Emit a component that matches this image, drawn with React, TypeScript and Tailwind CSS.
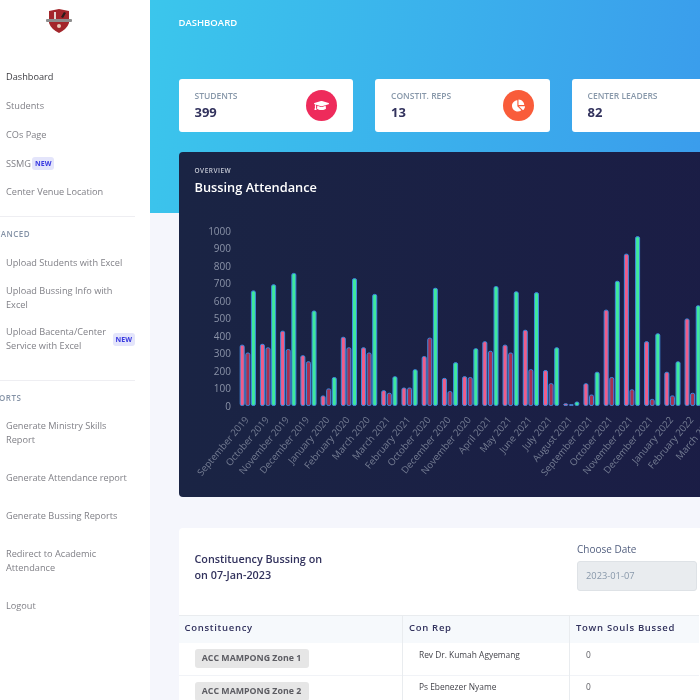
import React from 'react';
import { FaGraduationCap, FaChartPie } from 'react-icons/fa';

const bussing = [
  { label: 'September 2019', values: [345, 300, 655] },
  { label: 'October 2019', values: [350, 330, 690] },
  { label: 'November 2019', values: [425, 320, 755] },
  { label: 'December 2019', values: [285, 250, 540] },
  { label: 'January 2020', values: [55, 95, 160] },
  { label: 'February 2020', values: [390, 330, 725] },
  { label: 'March 2020', values: [330, 300, 635] },
  { label: 'March 2021', values: [85, 70, 165] },
  { label: 'February 2021', values: [100, 100, 205] },
  { label: 'October 2020', values: [280, 385, 670] },
  { label: 'December 2020', values: [155, 80, 245] },
  { label: 'November 2020', values: [165, 160, 325] },
  { label: 'April 2021', values: [365, 310, 680] },
  { label: 'May 2021', values: [345, 300, 650] },
  { label: 'June 2021', values: [430, 205, 645] },
  { label: 'July 2021', values: [200, 125, 330] },
  { label: 'August 2021', values: [10, 3, 20] },
  { label: 'September 2021', values: [125, 60, 190] },
  { label: 'October 2021', values: [545, 160, 710] },
  { label: 'November 2021', values: [865, 90, 965] },
  { label: 'December 2021', values: [365, 35, 410] },
  { label: 'January 2022', values: [190, 55, 250] },
  { label: 'February 2022', values: [495, 70, 570] },
  { label: 'March 2022', values: [300, 60, 420] },
];

const barColors = ['#f05c88', '#a8304f', '#3fe89c'];

const BussingChart = () => {
  const baseY = 405.5;
  const scale = 0.175;
  return (
    <svg viewBox="179 215 521 280" className="block w-[521px] h-[280px]">
      {[0, 100, 200, 300, 400, 500, 600, 700, 800, 900, 1000].map((tick) => (
        <text key={tick} x={231} y={baseY - tick * scale + 4} textAnchor="end" fontSize={10} fill="#8b93a8">
          {tick}
        </text>
      ))}
      {bussing.map((group, i) => {
        const x = 240.2 + i * 20.22;
        return (
          <g key={group.label}>
            {group.values.map((value, j) => {
              const height = Math.max(value * scale, 1);
              return (
                <rect
                  key={j}
                  x={x + j * 5.6}
                  y={baseY - height}
                  width={4}
                  height={height}
                  rx={1.6}
                  fill={barColors[j]}
                  stroke="#3d8ae0"
                  strokeWidth={1}
                />
              );
            })}
            <text
              x={x + 9}
              y={420}
              textAnchor="end"
              fontSize={9.6}
              fill="#747c92"
              transform={`rotate(-50 ${x + 9} 420)`}
            >
              {group.label}
            </text>
          </g>
        );
      })}
    </svg>
  );
};

const Logo = () => (
  <svg viewBox="0 0 28 26" className="w-[28px] h-[26px]">
    <path d="M4 3 L14 1 L24 3 L24 15 Q22 21 14 25 Q6 21 4 15 Z" fill="#a3262b" />
    <rect x="1" y="11" width="26" height="3" rx="1" fill="#8d8d8d" />
    <rect x="9" y="4" width="2" height="7" fill="#e6d6d0" />
    <path d="M16 9 L19 4 L21 5 L18 10 Z" fill="#2b1b1b" />
    <circle cx="14" cy="18" r="2" fill="#e9c9b8" />
  </svg>
);

const NewBadge = () => (
  <span className="inline-block rounded-[3px] bg-[#e4e5fb] px-[3px] py-[2px] text-[7px] font-bold leading-[9px] text-[#3a3ae0]">
    NEW
  </span>
);

const NavItem = ({ children, active, className = '' }: { children: React.ReactNode; active?: boolean; className?: string }) => (
  <div className={`pl-[6px] pr-[15px] text-[9.2px] leading-[14px] ${active ? 'text-[#3d3d42]' : 'text-[#808087]'} ${className}`}>
    {children}
  </div>
);

const Sidebar = () => (
  <aside className="w-[150px] h-[700px] shrink-0 overflow-hidden bg-white">
    <div className="flex justify-center pt-[8px] pb-[29px] pr-[32px] pl-0">
      <Logo />
    </div>
    <NavItem active className="py-[7px]">Dashboard</NavItem>
    <NavItem className="py-[7.5px]">Students</NavItem>
    <NavItem className="py-[7.5px]">COs Page</NavItem>
    <NavItem className="py-[7.5px]">
      <span className="flex items-center gap-[1px] h-[14px]">SSMG <NewBadge /></span>
    </NavItem>
    <NavItem className="py-[7px]">Center Venue Location</NavItem>

    <div className="mt-[10px] mr-[15px] border-t border-[#eeeef2]" />
    <div className="mt-[12px] -ml-[17px] text-[8px] leading-[10px] font-semibold tracking-[0.5px] text-[#8492a6]">ADVANCED</div>
    <div className="mt-[10px]">
      <NavItem className="py-[7px]">Upload Students with Excel</NavItem>
      <NavItem className="py-[7px]">Upload Bussing Info with Excel</NavItem>
      <div className="flex items-center justify-between pr-[15px]">
        <NavItem className="py-[6px] -mr-[15px] whitespace-nowrap">
          Upload Bacenta/Center
          <br />
          Service with Excel
        </NavItem>
        <NewBadge />
      </div>
    </div>

    <div className="mt-[21px] mr-[15px] border-t border-[#eeeef2]" />
    <div className="mt-[12px] -ml-[17px] text-[8px] leading-[10px] font-semibold tracking-[0.5px] text-[#8492a6]">REPORTS</div>
    <div className="mt-[4px]">
      <NavItem className="py-[12px]">Generate Ministry Skills Report</NavItem>
      <NavItem className="py-[12px]">Generate Attendance report</NavItem>
      <NavItem className="py-[12px]">Generate Bussing Reports</NavItem>
      <NavItem className="py-[12px]">Redirect to Academic Attendance</NavItem>
      <NavItem className="py-[12px]">Logout</NavItem>
    </div>
  </aside>
);

const StatCard = ({ title, value, icon, color, width }: { title: string; value: string; icon: React.ReactNode; color: string; width: string }) => (
  <div className={`${width} h-[53px] shrink-0 rounded-[3px] bg-white flex items-center justify-between pl-[16px] pr-[16px]`}>
    <div>
      <div className="text-[8.5px] leading-[12px] font-semibold text-[#8898aa]">{title}</div>
      <div className="mt-[2px] text-[13px] leading-[17px] font-bold text-[#32325d]">{value}</div>
    </div>
    <div className={`w-[31px] h-[31px] rounded-full flex items-center justify-center text-white ${color}`}>{icon}</div>
  </div>
);

const rows = [
  { name: 'ACC MAMPONG Zone 1', rep: 'Rev Dr. Kumah Agyemang', souls: '0' },
  { name: 'ACC MAMPONG Zone 2', rep: 'Ps Ebenezer Nyame', souls: '0' },
];

export default function App() {
  return (
    <div className="w-[700px] h-[700px] overflow-hidden flex bg-[#f5f6fc] blur-[0.35px] font-['Open_Sans',sans-serif]">
      <Sidebar />
      <main className="flex-1 min-w-0 overflow-hidden">
        <div className="w-[800px]">
          <header className="h-[213px] bg-linear-[100deg,#3bc6ec,#3a8aec] pl-[28.5px] pt-[16px]">
            <div className="text-[9.5px] leading-[13px] font-semibold text-white">DASHBOARD</div>
            <div className="mt-[50px] flex gap-[22px]">
              <StatCard title="STUDENTS" value="399" width="w-[174.5px]" color="bg-[#ee2b5b]" icon={<FaGraduationCap size={15} />} />
              <StatCard title="CONSTIT. REPS" value="13" width="w-[174.5px]" color="bg-[#f95c3a]" icon={<FaChartPie size={13} />} />
              <StatCard title="CENTER LEADERS" value="82" width="w-[178px]" color="bg-[#f9a825]" icon={<FaChartPie size={13} />} />
            </div>
          </header>

          <section className="-mt-[61px] ml-[28.5px] h-[345px] rounded-[4px] bg-linear-[90deg,#1a2444,#1b1a46]">
            <div className="pl-[16px] pt-[14px]">
              <div className="text-[6.5px] leading-[9px] font-semibold tracking-[0.5px] text-[#c4c8d4]">OVERVIEW</div>
              <div className="mt-[4px] text-[12.8px] leading-[17px] font-semibold text-white">Bussing Attendance</div>
            </div>
            <div className="mt-[19px]">
              <BussingChart />
            </div>
          </section>

          <section className="mt-[31px] ml-[28.5px] rounded-t-[4px] bg-white">
            <div className="h-[86.5px] flex">
              <div className="w-[398.5px] pl-[16px] pt-[23px] text-[10.8px] leading-[16px] font-semibold text-[#32325d]">
                Constituency Bussing on
                <br />
                on 07-Jan-2023
              </div>
              <div className="pt-[14px]">
                <div className="text-[10px] leading-[14px] text-[#525f7f]">Choose Date</div>
                <div className="mt-[5px] w-[120px] h-[30px] rounded-[3px] border border-[#dee2e6] bg-[#e9ecef] pl-[8px] text-[9.3px] leading-[28px] text-[#8898aa]">
                  2023-01-07
                </div>
              </div>
            </div>
            <table className="w-[520px] table-fixed border-collapse text-left">
              <thead>
                <tr className="h-[28px] bg-[#f6f9fc] text-[9.5px] font-semibold tracking-[0.7px] text-[#32325d]">
                  <th className="w-[224px] border-t border-r border-[#e9ecef] pl-[6px] pb-[2px] font-semibold">Constituency</th>
                  <th className="w-[167px] border-t border-r border-[#e9ecef] pl-[6px] pb-[2px] font-semibold">Con Rep</th>
                  <th className="border-t border-[#e9ecef] pl-[6px] pb-[2px] font-semibold">Town Souls Bussed</th>
                </tr>
              </thead>
              <tbody>
                {rows.map((row) => (
                  <tr key={row.name} className="h-[32px] border-b border-[#f1f3f7]">
                    <td className="border-r border-[#e9ecef] pl-[16px]">
                      <span className="block h-[19px] w-[114px] rounded-[3px] bg-[#e6e6e6] text-center text-[8.8px] font-bold leading-[19px] text-[#5c5c62]">
                        {row.name}
                      </span>
                    </td>
                    <td className="border-r border-[#e9ecef] pl-[16px] pb-[7px] text-[8.4px] text-[#43434a]">{row.rep}</td>
                    <td className="pl-[16px] pb-[7px] text-[8.4px] text-[#5c5c62]">{row.souls}</td>
                  </tr>
                ))}
              </tbody>
            </table>
          </section>
        </div>
      </main>
    </div>
  );
}
